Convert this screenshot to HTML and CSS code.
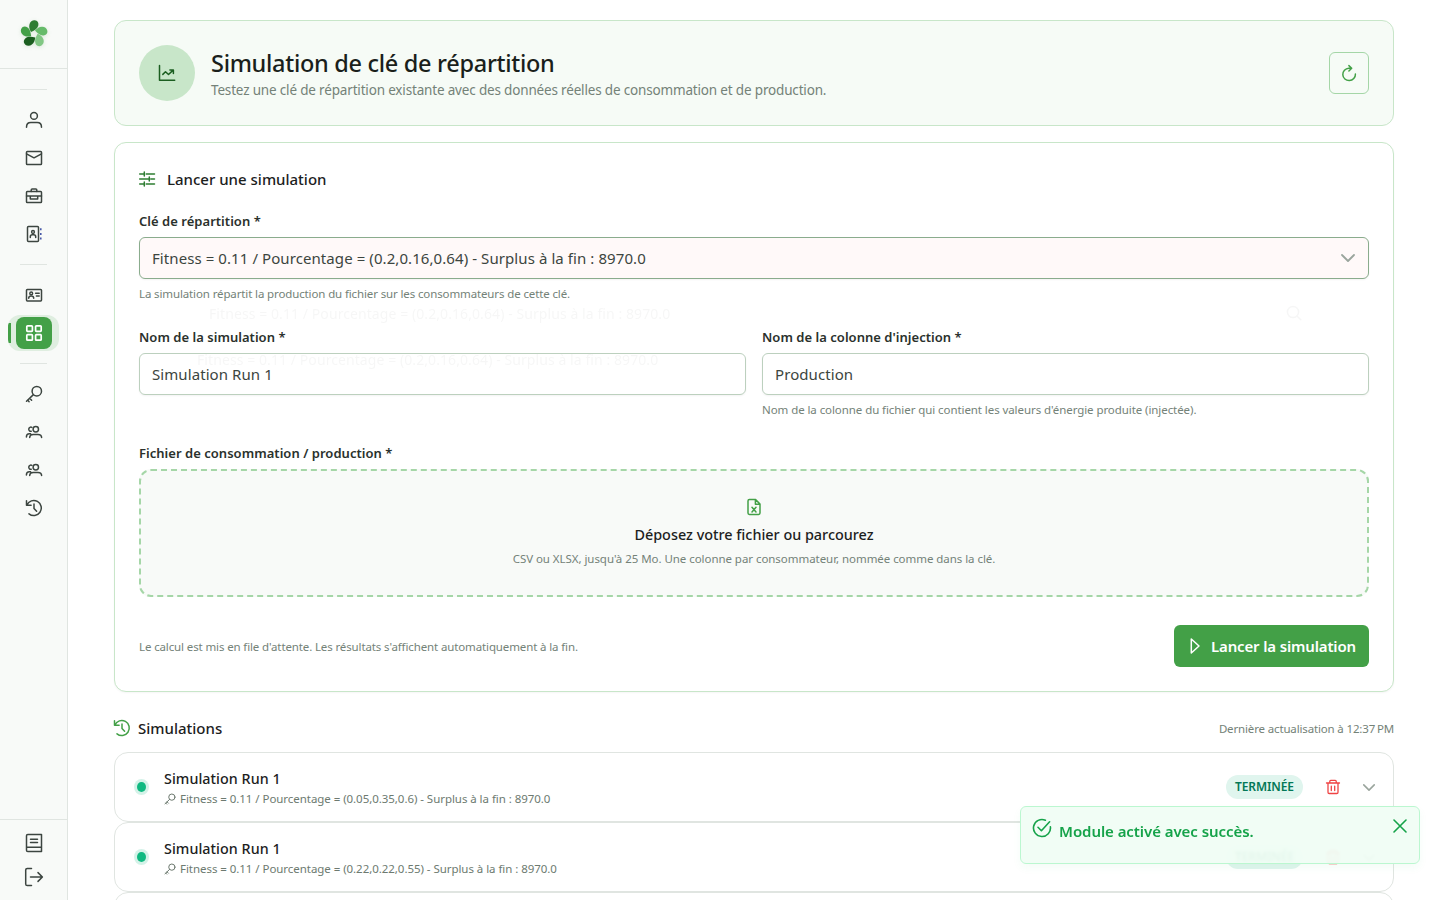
FILE: index.html
```html
<!DOCTYPE html>
<html lang="fr">
  <head>
    <meta charset="UTF-8" />
    <meta name="viewport" content="width=device-width, initial-scale=1.0" />
    <title>Simulation de clé de répartition</title>
    <link rel="stylesheet" href="styles.css">
  </head>
  <body>
    <!-- shared icons -->
    <svg class="sprite">
      <symbol id="i-petal" viewBox="-14 -14 28 28" overflow="visible">
        <path d="M-3-2C-4.600-5-5.200-7.200-4.500-9.800-3.800-12.400-1.500-13.900.7-13.700 3.600-13.500 4.900-11 4.300-8.500 3.600-5.500.9-3.800-3-2Z" />
      </symbol>
      <symbol id="i-history" viewBox="0 0 18 18">
        <path d="M1.5 1.8v4.4h4.6M1.9 6A7.5 7.5 0 1 1 4 14.8M9 5v4.4l2.6 2.8" />
      </symbol>
      <symbol id="i-users" viewBox="0 0 18 18">
        <circle cx="10.8" cy="6.3" r="2.7" />
        <path d="M4.7 14.6c0-2 1.600-3.200 3.600-3.200h4.700c2 0 3.600 1.200 3.600 3.200M6.900 4.400a2.100 2.100 0 1 0-.7 3.900M1.400 13.900c0-2 1.200-3.200 3-3.200h1.200" />
      </symbol>
      <symbol id="i-key" viewBox="0 0 18 18">
        <circle cx="11.8" cy="6.2" r="4.7" />
        <path d="M8.4 9.6 1.5 16.2M4.6 13.3l2 2M2.6 15.1l1.5 1.6" />
      </symbol>
      <symbol id="i-chevron" viewBox="0 0 16 10">
        <path d="m2 2 6 6 6-6" />
      </symbol>
      <symbol id="i-trash" viewBox="0 0 16 16">
        <path d="M1.500 4h13M3 4v9.300c0 .7.5 1.200 1.200 1.200h7.600c.7 0 1.200-.5 1.200-1.200V4M4.800 4V2.200c0-.5.4-.9.9-.9h4.600c.5 0 .9.4.9.9V4M6.300 7.200v4.400M9.700 7.200v4.400" />
      </symbol>
    </svg>

    <div class="layout">
      <aside class="sidebar">
        <div class="brand">
          <svg class="logo" viewBox="-14 -14 28 28">
            <g class="p1"><use href="#i-petal" x="-14" y="-14" width="28" height="28" /></g>
            <g class="p2"><use href="#i-petal" x="-14" y="-14" width="28" height="28" /></g>
            <g class="p3"><use href="#i-petal" x="-14" y="-14" width="28" height="28" /></g>
            <g class="p4"><use href="#i-petal" x="-14" y="-14" width="28" height="28" /></g>
            <g class="p5"><use href="#i-petal" x="-14" y="-14" width="28" height="28" /></g>
          </svg>
        </div>

        <nav class="menu">
          <hr />
          <a href="#" aria-label="Profil">
            <svg class="icon" viewBox="0 0 18 18">
              <circle cx="9" cy="4.9" r="3.4" />
              <path d="M1.500 16.200c0-3 2-4.600 4.300-4.600h6.400c2.300 0 4.300 1.600 4.300 4.600" />
            </svg>
          </a>
          <a href="#" aria-label="Messages">
            <svg class="icon" viewBox="0 0 18 18">
              <rect x="1.5" y="2.5" width="15" height="13" rx=".8" />
              <path d="M1.5 4.8 9 8.8l7.5-4" />
            </svg>
          </a>
          <a href="#" aria-label="Entreprise">
            <svg class="icon" viewBox="0 0 18 18">
              <rect x="1.5" y="4.6" width="15" height="11" rx=".8" />
              <path d="M6.2 4.4V3.1c0-.6.4-1 1-1h3.6c.6 0 1 .4 1 1v1.3M1.5 8.9h15M5.3 9v3h7.4V9" />
            </svg>
          </a>
          <a href="#" aria-label="Contacts">
            <svg class="icon" viewBox="0 0 18 18">
              <rect x="2.5" y="1.6" width="11" height="14.8" rx="1" />
              <circle cx="8" cy="7" r="1.4" />
              <path d="M5.3 12.4v-.6c0-1.2.9-2 2-2h1.4c1.1 0 2 .8 2 2v.6" />
              <path class="tabs" d="M15.8 3.3v12" />
            </svg>
          </a>
          <hr />
          <a href="#" aria-label="Membres">
            <svg class="icon" viewBox="0 0 18 18">
              <rect x="1.5" y="3.5" width="15" height="11.4" rx=".8" />
              <circle cx="6.2" cy="7.4" r="1.4" />
              <path d="M3.7 12.2c0-1.4 1-2.2 2.5-2.2s2.5.8 2.5 2.2M10.6 7.3h3.6M11.4 10h2.8" />
            </svg>
          </a>
          <a href="#" class="active" aria-label="Modules">
            <span class="halo">
              <span class="tile">
                <svg class="icon" viewBox="0 0 18 18">
                  <rect x="1.8" y="1.8" width="5.6" height="5.6" rx=".8" />
                  <rect x="10.6" y="1.8" width="5.6" height="5.6" rx=".8" />
                  <rect x="1.8" y="10.6" width="5.6" height="5.6" rx=".8" />
                  <rect x="10.6" y="10.6" width="5.6" height="5.6" rx=".8" />
                </svg>
              </span>
            </span>
          </a>
          <hr />
          <a href="#" aria-label="Clés"><svg class="icon"><use href="#i-key" /></svg></a>
          <a href="#" aria-label="Groupes"><svg class="icon"><use href="#i-users" /></svg></a>
          <a href="#" aria-label="Communautés"><svg class="icon"><use href="#i-users" /></svg></a>
          <a href="#" aria-label="Historique"><svg class="icon"><use href="#i-history" /></svg></a>
        </nav>

        <div class="menu-bottom">
          <a href="#" aria-label="Documentation">
            <svg class="icon icon-lg" viewBox="0 0 20 20">
              <path d="M3.8 1.5h13.7v17H3.8c-.7 0-1.3-.6-1.3-1.3V2.8c0-.7.6-1.3 1.3-1.3zM2.6 14.2h14.8M6.500 6.200h7M6.500 9.600h7" />
            </svg>
          </a>
          <a href="#" aria-label="Déconnexion">
            <svg class="icon icon-lg" viewBox="0 0 20 20">
              <path d="M7.5 1.5H3.3c-.9 0-1.6.7-1.6 1.6v13.8c0 .9.7 1.6 1.6 1.6h4.2M6.5 10h11.8M14 5.6l4.4 4.4-4.4 4.4" />
            </svg>
          </a>
        </div>
      </aside>

      <main class="page">
        <header class="hero">
          <div class="hero-icon">
            <svg class="icon" viewBox="0 0 18 18">
              <path d="M1.500 1.500v14.800h15.200M4.800 10.400l2.700-2.700 3 2.800 4.700-4.400M11.900 5.900h3.500v3.500" />
            </svg>
          </div>
          <div class="hero-text">
            <h1>Simulation de clé de répartition</h1>
            <p>Testez une clé de répartition existante avec des données réelles de consommation et de production.</p>
          </div>
          <button class="refresh" aria-label="Actualiser">
            <svg class="icon" viewBox="0 0 18 18">
              <path d="M11 4.200H8.800a6.300 6.200 0 1 0 6.600 5.900M8.900 1.600l2.800 2.600-2.800 2.800" />
            </svg>
          </button>
        </header>

        <section class="card">
          <h2>
            <svg class="icon" viewBox="0 0 18 18">
              <path d="M1.700 4h4M8.200 4h8.300M6.300 2v4M1.700 9h9.200M12.800 9h3.700M11.300 7v4M1.700 14h4M8.200 14h8.300M6.300 12v4" />
            </svg>
            Lancer une simulation
          </h2>

          <div class="field">
            <label>Clé de répartition *</label>
            <div class="control select">
              <span>Fitness = 0.11 / Pourcentage = (0.2,0.16,0.64) - Surplus à la fin : 8970.0</span>
              <svg class="icon chevron"><use href="#i-chevron" /></svg>
            </div>
            <small>La simulation répartit la production du fichier sur les consommateurs de cette clé.</small>

            <!-- dropdown fading out -->
            <div class="options" aria-hidden="true">
              <div class="options-search">
                <span>Fitness = 0.11 / Pourcentage = (0.2,0.16,0.64) - Surplus à la fin : 8970.0</span>
                <svg class="icon" viewBox="0 0 16 16"><circle cx="7" cy="7" r="5.6" /><path d="m11.2 11.2 3.6 3.6" /></svg>
              </div>
              <div class="option">Fitness = 0.11 / Pourcentage = (0.2,0.16,0.64) - Surplus à la fin : 8970.0</div>
            </div>
          </div>

          <div class="row">
            <div class="field">
              <label for="name">Nom de la simulation *</label>
              <input class="control" id="name" type="text" value="Simulation Run 1" />
            </div>
            <div class="field">
              <label for="column">Nom de la colonne d'injection *</label>
              <input class="control" id="column" type="text" value="Production" />
              <small>Nom de la colonne du fichier qui contient les valeurs d'énergie produite (injectée).</small>
            </div>
          </div>

          <div class="field">
            <label>Fichier de consommation / production *</label>
            <div class="dropzone">
              <svg class="icon" viewBox="0 0 18 18">
                <path d="M10.600 1.600H4.400c-.8 0-1.400.6-1.400 1.400v12c0 .8.6 1.400 1.400 1.400h9.200c.8 0 1.400-.6 1.400-1.400V6zM10.400 1.800v4.400h4.400M7 9.300l4 4.700M11 9.300l-4 4.700" />
              </svg>
              <strong>Déposez votre fichier ou parcourez</strong>
              <small>CSV ou XLSX, jusqu'à 25 Mo. Une colonne par consommateur, nommée comme dans la clé.</small>
            </div>
          </div>

          <div class="card-footer">
            <small>Le calcul est mis en file d'attente. Les résultats s'affichent automatiquement à la fin.</small>
            <button class="submit">
              <svg class="icon" viewBox="0 0 18 18"><path d="M5.300 2v14l7.700-7z" /></svg>
              Lancer la simulation
            </button>
          </div>
        </section>

        <div class="list-header">
          <h2><svg class="icon"><use href="#i-history" /></svg>Simulations</h2>
          <small>Dernière actualisation à 12:37&#8239;PM</small>
        </div>

        <div class="list">
          <article class="item">
            <span class="dot"></span>
            <div class="item-text">
              <h3>Simulation Run 1</h3>
              <p><svg class="icon"><use href="#i-key" /></svg>Fitness = 0.11 / Pourcentage = (0.05,0.35,0.6) - Surplus à la fin : 8970.0</p>
            </div>
            <span class="badge">TERMINÉE</span>
            <svg class="icon trash"><use href="#i-trash" /></svg>
            <svg class="icon chevron"><use href="#i-chevron" /></svg>
          </article>
          <article class="item">
            <span class="dot"></span>
            <div class="item-text">
              <h3>Simulation Run 1</h3>
              <p><svg class="icon"><use href="#i-key" /></svg>Fitness = 0.11 / Pourcentage = (0.22,0.22,0.55) - Surplus à la fin : 8970.0</p>
            </div>
            <span class="badge">TERMINÉE</span>
            <svg class="icon trash"><use href="#i-trash" /></svg>
            <svg class="icon chevron"><use href="#i-chevron" /></svg>
          </article>
          <article class="item"></article>
        </div>
      </main>
    </div>

    <div class="toast" role="status">
      <svg class="icon" viewBox="0 0 20 20">
        <path d="M18.400 8.800a8.500 8.500 0 1 1-5-6.600M6 9.300l3.400 3.400 8.200-8.900" />
      </svg>
      <span>Module activé avec succès.</span>
      <svg class="icon close" viewBox="0 0 14 14"><path d="m1 1 12 12M13 1 1 13" /></svg>
    </div>
  </body>
</html>
```
FILE: styles.css
```css
* {
  box-sizing: border-box;
}

body {
  margin: 0;
  height: 100vh;
  overflow: hidden;
  background: #fff;
  color: #1c211d;
  font-family: "Noto Sans", "Open Sans", sans-serif;
}

h1, h2, h3, p {
  margin: 0;
  font-weight: 500;
}

button {
  font-family: inherit;
  cursor: pointer;
}

.sprite {
  position: absolute;
  width: 0;
  height: 0;
}

.icon {
  display: block;
  flex: none;
  width: 18px;
  height: 18px;
  fill: none;
  stroke: currentColor;
  stroke-width: 1.5;
  stroke-linecap: round;
  stroke-linejoin: round;
}

.layout {
  display: flex;
  height: 100%;
}

/* sidebar */
.sidebar {
  display: flex;
  flex-direction: column;
  flex: none;
  width: 68px;
  background: #f8faf8;
  border-right: 1px solid #e0e5e1;
  color: #3c4540;
}

.brand {
  display: flex;
  justify-content: center;
  height: 69px;
  padding-top: 20px;
  border-bottom: 1px solid #e0e5e1;
}

.logo {
  width: 28px;
  height: 28px;
  overflow: visible;
  filter: drop-shadow(0 1px 2px rgba(46, 125, 50, 0.15));
}

.p1 { fill: #2e7d32; }
.p2 { fill: #66bb6a; transform: rotate(72deg); }
.p3 { fill: #81c784; transform: rotate(144deg); }
.p4 { fill: #1b5e20; transform: rotate(216deg); }
.p5 { fill: #43a047; transform: rotate(288deg); }

.menu {
  flex: 1;
  padding: 9px 0 0 1px;
}

.menu hr {
  width: 27px;
  height: 1px;
  margin: 11px 0 11px 19px;
  border: none;
  background: #e0e5e1;
}

.menu a {
  display: flex;
  align-items: center;
  justify-content: center;
  height: 38px;
  color: inherit;
}

.tabs {
  stroke: #3f51a5;
  stroke-dasharray: 2 2.6;
  stroke-linecap: butt;
}

.menu .active {
  justify-content: flex-start;
  padding-left: 7px;
}

.halo {
  display: flex;
  align-items: center;
  justify-content: center;
  height: 36px;
  width: 51px;
  padding-left: 1px;
  border-radius: 12px;
  background: linear-gradient(#43a047, #43a047) 0 50% / 3px 20px no-repeat, #dfeee0;
  color: #fff;
}

.tile {
  display: flex;
  align-items: center;
  justify-content: center;
  width: 36px;
  height: 32px;
  border-radius: 8px;
  background: #43a047;
}

.active .icon {
  stroke-width: 1.7;
}

.menu-bottom {
  padding: 6px 0 6px 1px;
  border-top: 1px solid #e0e5e1;
}

.menu-bottom a {
  display: flex;
  align-items: center;
  justify-content: center;
  height: 34px;
  color: inherit;
}

.icon-lg {
  width: 20px;
  height: 20px;
}

/* page */
.page {
  flex: 1;
  height: 100%;
  overflow: hidden;
  padding: 20px 46px 0;
}

.hero {
  display: flex;
  align-items: center;
  height: 106px;
  padding: 0 24px;
  border: 1px solid #c8e6c9;
  border-radius: 12px;
  background: #f6fbf6;
}

.hero-icon {
  display: flex;
  align-items: center;
  justify-content: center;
  width: 56px;
  height: 56px;
  margin-right: 16px;
  border-radius: 50%;
  background: #c8e6c9;
  color: #1b5e20;
}

.hero-text {
  flex: 1;
  padding-top: 2px;
}

.hero h1 {
  font-size: 23.5px;
  line-height: 32px;
  letter-spacing: -0.3px;
  color: #1a1f1b;
}

.hero p {
  font-size: 13.5px;
  line-height: 22px;
  letter-spacing: -0.17px;
  font-weight: 400;
  color: #748278;
}

.refresh {
  display: flex;
  align-items: center;
  justify-content: center;
  width: 40px;
  height: 42px;
  padding: 0;
  border: 1px solid #a5d6a7;
  border-radius: 6px;
  background: transparent;
  color: #43a047;
}

h2 {
  display: flex;
  align-items: center;
  font-size: 15px;
  line-height: 22px;
}

small {
  display: block;
  font-size: 11.5px;
  line-height: 18px;
  letter-spacing: -0.125px;
  color: #748278;
}

.card {
  margin-top: 16px;
  height: 550px;
  padding: 25px 24px 24px;
  border: 1px solid #c8e6c9;
  border-radius: 12px;
  background: #fff;
  box-shadow: 0 1px 2px rgba(0, 0, 0, 0.04);
}

.card h2 {
  gap: 11px;
  margin-left: -1px;
  margin-bottom: 21px;
}

.card h2 .icon {
  color: #2e7d32;
}

.field {
  position: relative;
}

label {
  display: block;
  margin-bottom: 6px;
  font-size: 13px;
  line-height: 20px;
  font-weight: 600;
  letter-spacing: 0.03px;
  color: #2a312c;
}

.control {
  display: flex;
  align-items: center;
  justify-content: space-between;
  width: 100%;
  height: 42px;
  padding: 0 12px;
  border: 1px solid #bcd0be;
  border-radius: 6px;
  background: #fff;
  font-family: inherit;
  font-size: 15px;
  letter-spacing: 0.08px;
  color: #3c4540;
  box-shadow: 0 1px 2px rgba(18, 18, 23, 0.05);
}

.select {
  border-color: #8aac8d;
  background: #fff9f9;
}

.chevron {
  width: 16px;
  height: 10px;
  color: #9aa59d;
  stroke-width: 1.8;
}

.field small {
  margin-top: 6px;
}

.row small {
  letter-spacing: -0.075px;
}

.options {
  position: absolute;
  top: 83px;
  left: 34px;
  width: 1141px;
  opacity: 0.035;
  pointer-events: none;
  z-index: 2;
  font-size: 14px;
  letter-spacing: 0.08px;
}

.options-search {
  display: flex;
  align-items: center;
  justify-content: space-between;
  height: 38px;
  margin-bottom: 18px;
  padding: 0 12px 0 36px;
}

.options-search .icon {
  width: 16px;
  height: 16px;
}

.option {
  padding-left: 24px;
  line-height: 20px;
}

.row {
  display: grid;
  grid-template-columns: 1fr 1fr;
  gap: 16px;
  margin: 24px 0;
}

.dropzone {
  display: flex;
  flex-direction: column;
  align-items: center;
  height: 128px;
  padding-top: 27px;
  border: 2px dashed #a5d6a7;
  border-radius: 12px;
  background: #f8faf8;
}

.dropzone .icon {
  color: #43a047;
}

.dropzone strong {
  margin-top: 8px;
  font-size: 14.4px;
  line-height: 22px;
  font-weight: 500;
}

.dropzone small {
  margin-top: 4px;
  letter-spacing: -0.05px;
}

.card-footer {
  display: flex;
  align-items: center;
  justify-content: space-between;
  margin-top: 28px;
}

.card-footer small,
.list-header small {
  padding-top: 2px;
}

.list-header small {
  letter-spacing: -0.15px;
}

.submit {
  display: flex;
  align-items: center;
  gap: 7px;
  width: 195px;
  height: 42px;
  padding: 0 12px;
  border: none;
  border-radius: 6px;
  background: #43a047;
  color: #fff;
  font-size: 15px;
  font-weight: 600;
  letter-spacing: -0.15px;
  white-space: nowrap;
}

/* simulations */
.list-header {
  display: flex;
  align-items: center;
  justify-content: space-between;
  margin: 25px 0 13px;
}

.list-header h2 {
  gap: 7px;
  margin-left: -1px;
}

.list-header .icon {
  color: #43a047;
}

.item {
  display: flex;
  align-items: center;
  height: 70px;
  padding: 0 17px 0 22px;
  border: 1px solid #e0e5e1;
  border-radius: 14px;
  background: #fff;
}

.dot {
  width: 9px;
  height: 10px;
  border-radius: 50%;
  background: #10b981;
  box-shadow: 0 0 0 3px rgba(16, 185, 129, 0.18);
}

.item-text {
  flex: 1;
  margin-left: 18px;
  padding-top: 4px;
}

.item h3 {
  font-size: 14.3px;
  line-height: 20px;
  letter-spacing: 0.05px;
}

.item p {
  display: flex;
  align-items: center;
  gap: 4px;
  font-size: 11.5px;
  line-height: 20px;
  letter-spacing: -0.05px;
  font-weight: 400;
  color: #6d7a70;
}

.item p .icon {
  width: 12px;
  height: 12px;
}

.badge {
  width: 77px;
  height: 24px;
  border-radius: 12px;
  background: #e0f5ee;
  color: #047857;
  font-size: 12px;
  line-height: 24px;
  font-weight: 600;
  letter-spacing: -0.1px;
  text-align: center;
}

.trash {
  width: 16px;
  height: 16px;
  margin: 0 21px 0 22px;
  color: #ef4444;
  stroke-width: 1.3;
}

.item .chevron {
  width: 14px;
  height: 9px;
}

/* toast */
.toast {
  position: absolute;
  right: 20px;
  bottom: 36px;
  z-index: 5;
  display: flex;
  width: 400px;
  height: 58px;
  padding: 11px 12px 0 11px;
  border: 1px solid #bbf7d0;
  border-radius: 6px;
  background: rgba(240, 253, 244, 0.95);
  backdrop-filter: blur(1.5px);
  box-shadow: 0 4px 8px rgba(34, 197, 94, 0.05);
  color: #16a34a;
}

.toast .icon {
  width: 20px;
  height: 20px;
  stroke-width: 1.6;
}

.toast span {
  flex: 1;
  margin: 2px 0 0 7px;
  font-size: 15px;
  line-height: 22px;
  font-weight: 600;
  letter-spacing: -0.06px;
}

.toast .close {
  width: 14px;
  height: 14px;
  margin-top: 1px;
}
```
